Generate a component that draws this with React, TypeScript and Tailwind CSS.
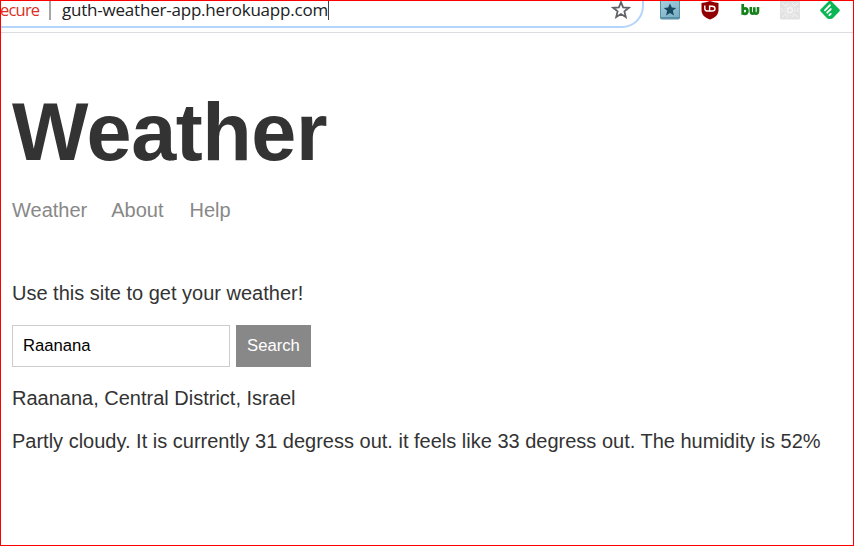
import React from "react";

function StarIcon() {
  return (
    <svg width="20" height="20" viewBox="0 0 20 20" className="block">
      <path d="M10 2.2 L12.1 7.4 L17.8 7.8 L13.4 11.4 L14.8 17 L10 14 L5.2 17 L6.6 11.4 L2.2 7.8 L7.9 7.4 Z" fill="none" stroke="#606367" strokeWidth="1.8" />
    </svg>
  );
}

function BookmarkExtension() {
  return (
    <svg width="22" height="20" viewBox="0 0 22 20" className="block">
      <defs>
        <linearGradient id="tile" x1="0" y1="0" x2="0.6" y2="1">
          <stop offset="0" stopColor="#a9d2e0" />
          <stop offset="1" stopColor="#7bb0c4" />
        </linearGradient>
      </defs>
      <rect x="1.5" y="-1" width="19" height="19" rx="1" fill="url(#tile)" stroke="#5b8fa6" />
      <path d="M2 16.8 H20" stroke="#5289a0" strokeWidth="1.4" />
      <path d="M11 2.4 L12.8 6.6 L17.2 6.9 L13.8 9.8 L15 14.4 L11 12 L7 14.4 L8.2 9.8 L4.8 6.9 L9.2 6.6 Z" fill="#164a60" />
    </svg>
  );
}

function ShieldExtension() {
  return (
    <svg width="20" height="20" viewBox="0 0 20 20" className="block">
      <path d="M1.5 2 Q6 1.5 10 0 Q14 1.5 18.5 2 V9 C18.5 14 15 16.8 10 18.6 C5 16.8 1.5 14 1.5 9 Z" fill="#900000" />
      <path d="M4.8 4.6 V7.6 Q4.8 10 7 10 H9.6 V4.6" fill="none" stroke="#fff" strokeWidth="1.4" />
      <path d="M9.6 5.3 H12 Q15 5.3 15 7.65 Q15 10 12 10 H9.6" fill="none" stroke="#fff" strokeWidth="1.4" />
    </svg>
  );
}

function BwExtension() {
  return (
    <svg width="20" height="20" viewBox="0 0 20 20" className="block">
      <path d="M2.7 3 V13.8 M2.7 8.4 Q3.5 7.3 5 7.3 Q7.4 7.3 7.4 10 Q7.4 12.8 5 12.8 Q3.5 12.8 2.7 11.8" fill="none" stroke="#16821c" strokeWidth="2.7" />
      <path d="M10.8 6 V10.3 Q10.8 12.7 12.5 12.7 Q14.3 12.7 14.3 10.3 V6.3 M14.3 10.3 Q14.3 12.7 16 12.7 Q18 12.7 18 10.3 V6" fill="none" stroke="#16821c" strokeWidth="2.6" />
    </svg>
  );
}

function PatternExtension() {
  return (
    <svg width="20" height="20" viewBox="0 0 20 20" className="block">
      <rect x="0" y="-1" width="20" height="19.5" rx="1" fill="#e2e2e2" />
      <g fill="none" stroke="#f6f6f6" strokeWidth="1">
        <circle cx="10" cy="9.2" r="2.4" strokeWidth="1.4" />
        <circle cx="10" cy="9.2" r="5" strokeDasharray="2 1.2" />
        <path d="M2 2 L5 5 L8 2 M12 2 L15 5 L18 2 M2 16.4 L5 13.4 L8 16.4 M12 16.4 L15 13.4 L18 16.4 M1 7 L3 9.2 L1 11.4 M19 7 L17 9.2 L19 11.4" />
      </g>
    </svg>
  );
}

function FeedlyExtension() {
  return (
    <svg width="20" height="20" viewBox="0 0 20 20" className="block">
      <path d="M8.7 0.2 Q10 -0.9 11.3 0.2 L19.3 8.2 Q20.4 9.4 19.3 10.6 L12.8 17.2 Q12 18 10.8 18 H9 Q8 18 7.1 17.2 L0.7 10.6 Q-0.4 9.4 0.7 8.2 Z" fill="#0bb654" />
      <path d="M4.9 9.3 L10 4.2 M7.2 11.7 L10.8 8.1 M9.4 14.2 L10.7 12.9" stroke="#fff" strokeWidth="1.9" strokeLinecap="round" />
    </svg>
  );
}

function BrowserBar() {
  return (
    <div className="h-8 shrink-0 border-b border-[#dadce0] flex items-start">
      <div className="h-[27px] w-[643px] shrink-0 rounded-br-[22px] border-b-2 border-r-2 border-[#b3d4fb] flex items-start font-['Open_Sans',sans-serif] text-[17px] leading-[18px] whitespace-nowrap">
        <span className="w-12 shrink-0 text-[16.5px] -indent-px tracking-[-0.8px] text-[#d93025]">ecure</span>
        <span className="h-[19px] w-[2px] shrink-0 bg-[#a6a6a6]" />
        <span className="ml-[11px] shrink-0 text-[#202124] tracking-[-0.21px]">guth-weather-app.herokuapp.com</span>
        <span className="h-[19px] w-px shrink-0 bg-[#444]" />
        <span className="ml-auto mr-[11px] -mt-px"><StarIcon /></span>
      </div>
      <div className="ml-[15px] flex items-start">
        <BookmarkExtension />
        <div className="ml-[19px]"><ShieldExtension /></div>
        <div className="ml-5"><BwExtension /></div>
        <div className="ml-5"><PatternExtension /></div>
        <div className="ml-5"><FeedlyExtension /></div>
      </div>
    </div>
  );
}

export default function App() {
  return (
    <div className="h-[546px] w-[854px] overflow-hidden border border-[#ff0000] bg-white flex flex-col font-['Liberation_Sans',Arial,sans-serif] text-xl text-[#333]">
      <BrowserBar />
      <main className="pl-[11px] pt-[53px] whitespace-nowrap">
        <h1 className="text-[81px] leading-[92px] font-bold tracking-[-0.45px]">Weather</h1>
        <nav className="mt-5 flex leading-6 text-[#888]">
          <a>Weather</a>
          <a className="ml-6">About</a>
          <a className="ml-[26px]">Help</a>
        </nav>
        <p className="mt-[59px] leading-6">Use this site to get your weather!</p>
        <form className="mt-5 flex gap-1.5" onSubmit={(e) => e.preventDefault()}>
          <input defaultValue="Raanana" aria-label="Location" className="h-[42px] w-[218px] border border-[#ccc] px-2.5 text-[16.67px] text-black outline-none" />
          <button className="h-[42px] w-[75px] bg-[#888] text-[16.67px] text-white">Search</button>
        </form>
        <p className="mt-[19px] leading-6">Raanana, Central District, Israel</p>
        <p className="mt-[19px] leading-6">Partly cloudy. It is currently 31 degress out. it feels like 33 degress out. The humidity is 52%</p>
      </main>
    </div>
  );
}
